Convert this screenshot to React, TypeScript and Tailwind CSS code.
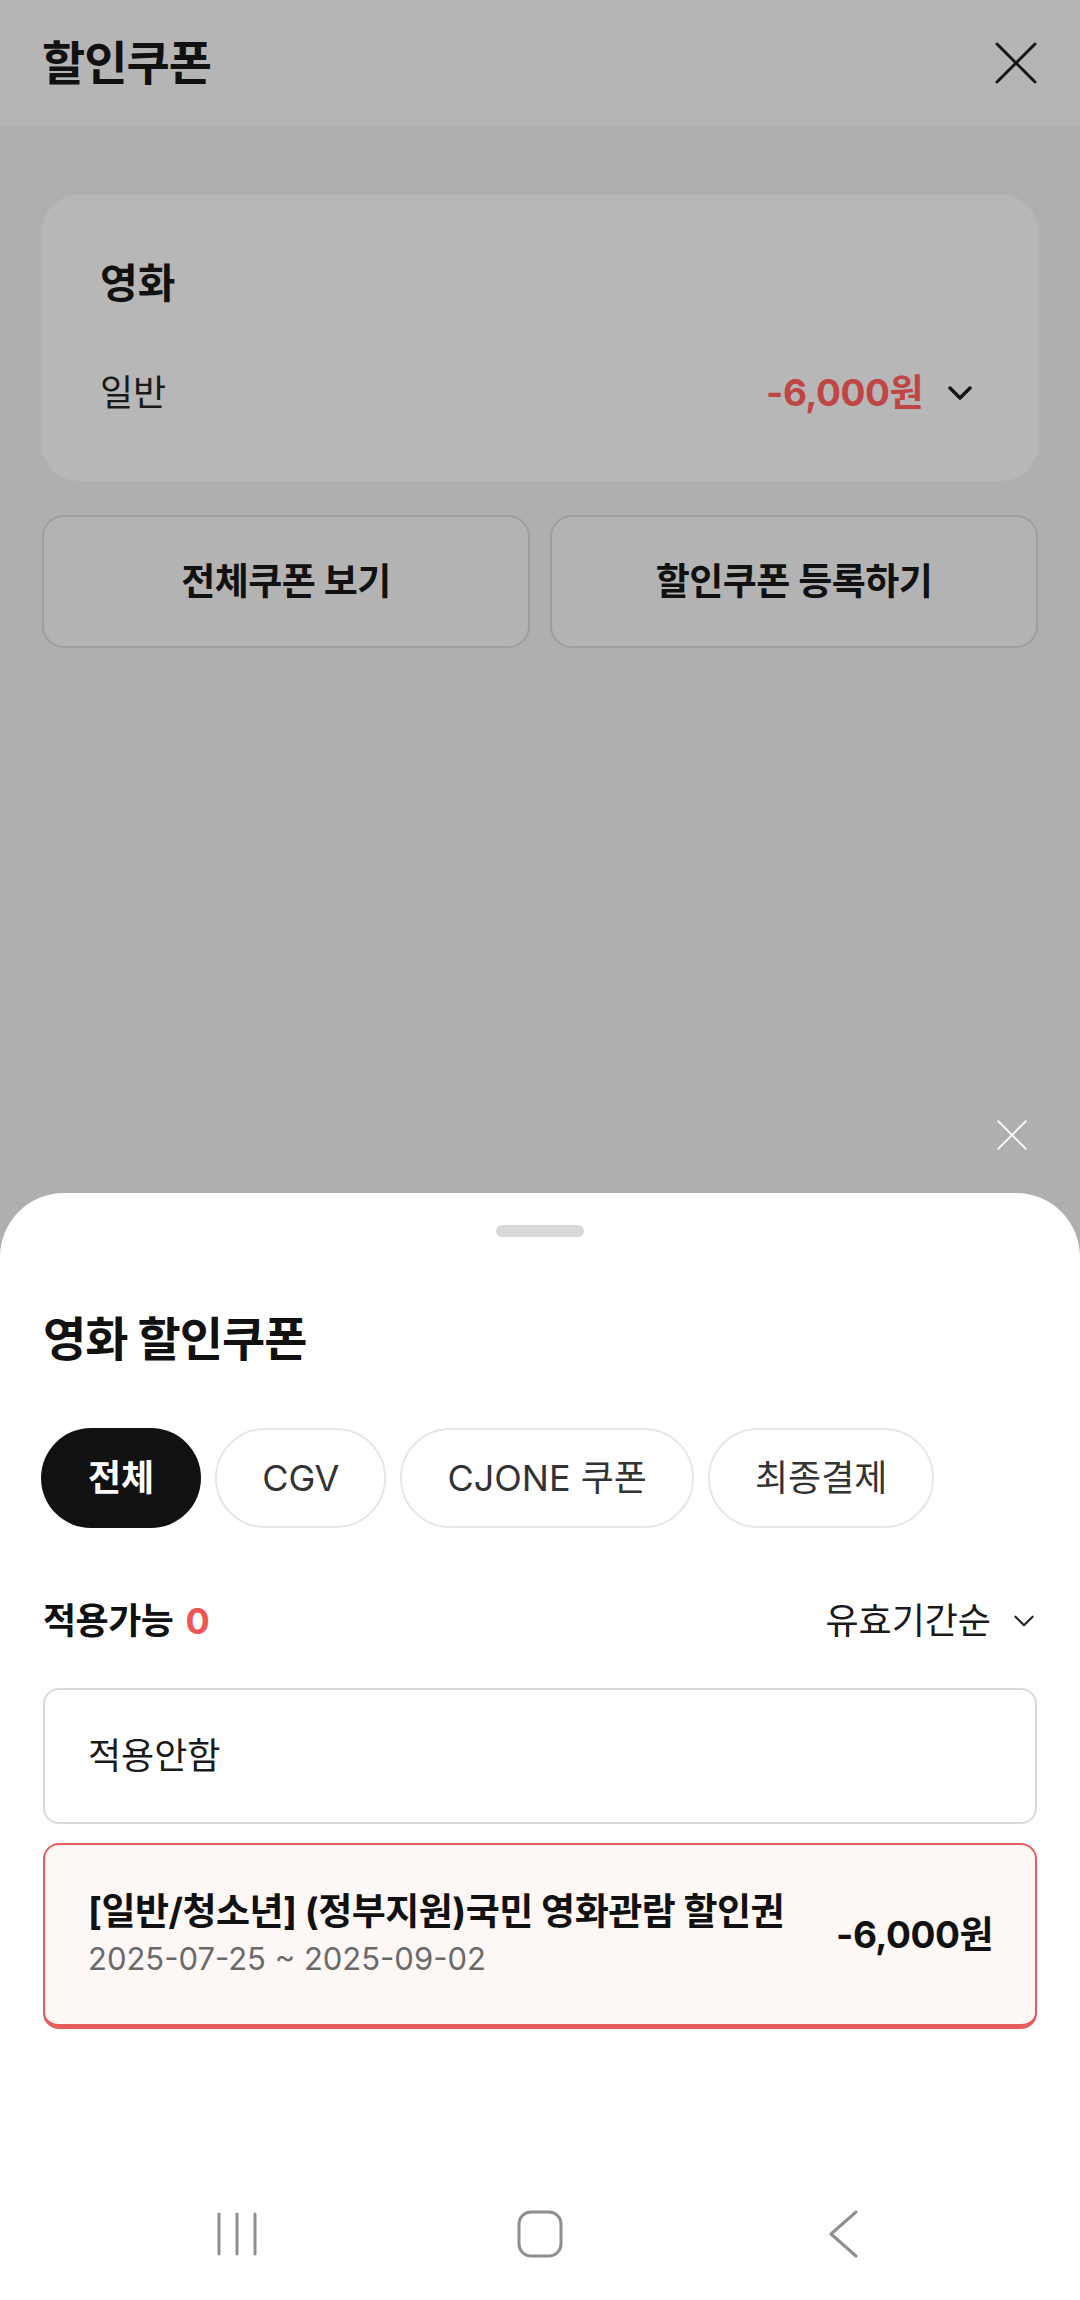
import React from 'react';

const tabs = ['전체', 'CGV', 'CJONE 쿠폰', '최종결제'];

const CloseIcon = ({ className, stroke }: { className: string; stroke: number }) => (
  <svg viewBox="0 0 44 44" className={className} fill="none" stroke="currentColor" strokeWidth={stroke} strokeLinecap="round">
    <path d="M3 3 L41 41 M41 3 L3 41" />
  </svg>
);

const Chevron = ({ className, stroke }: { className: string; stroke: number }) => (
  <svg viewBox="0 0 24 14" className={className} fill="none" stroke="currentColor" strokeWidth={stroke} strokeLinecap="round" strokeLinejoin="round">
    <path d="M2 2 L12 12 L22 2" />
  </svg>
);

const App = () => {
  return (
    <div className="relative w-[1080px] h-[2300px] overflow-hidden flex flex-col font-['Inter','Noto_Sans_CJK_KR',sans-serif] text-[#111]">
      {/* dimmed page behind the sheet */}
      <div className="h-[126px] bg-[#b5b5b5] flex items-center justify-between pl-[42px] pr-[42px] shrink-0">
        <h1 className="text-[47px] leading-[56px] font-bold tracking-[-1px]">할인쿠폰</h1>
        <CloseIcon className="w-[44px] h-[44px] text-[#151515]" stroke={3} />
      </div>

      <div className="flex-1 bg-[#afafaf] px-[42px] pt-[69px]">
        <div className="h-[286px] rounded-[36px] bg-[#b7b7b7] pl-[58px] pr-[66px] pt-[63px]">
          <p className="text-[41px] leading-[50px] font-bold">영화</p>
          <div className="mt-[60px] flex items-center justify-between h-[50px]">
            <span className="text-[36px] text-[#1a1a1a]">일반</span>
            <div className="flex items-center gap-[25px]">
              <span className="text-[37px] font-bold text-[#c04646] tracking-[-0.5px]">-6,000원</span>
              <Chevron className="w-[24px] h-[14px] text-[#151515]" stroke={3.5} />
            </div>
          </div>
        </div>

        <div className="mt-[34px] grid grid-cols-2 gap-[20px]">
          <div className="h-[133px] rounded-[22px] border-2 border-[#9e9e9e] bg-[#b3b3b3] flex items-center justify-center text-[37px] font-bold tracking-[-0.5px]">
            전체쿠폰 보기
          </div>
          <div className="h-[133px] rounded-[22px] border-2 border-[#9e9e9e] bg-[#b3b3b3] flex items-center justify-center text-[37px] font-bold tracking-[-0.5px]">
            할인쿠폰 등록하기
          </div>
        </div>
      </div>

      {/* sheet close button on the dim layer */}
      <CloseIcon className="absolute left-[996px] top-[1119px] w-[32px] h-[32px] text-white" stroke={2.5} />

      {/* bottom sheet */}
      <div className="absolute left-0 right-0 bottom-0 h-[1107px] bg-white rounded-t-[64px] flex flex-col">
        <div className="mt-[32px] mx-auto w-[88px] h-[12px] rounded-full bg-[#d9d9d9]" />

        <div className="px-[43px]">
          <h2 className="mt-[74px] text-[47px] leading-[56px] font-bold tracking-[-1px]">영화 할인쿠폰</h2>

          <div className="mt-[61px] -ml-[2px] flex gap-[14px]">
            {tabs.map((t, i) =>
              i === 0 ? (
                <div key={t} className="h-[100px] px-[47px] rounded-full bg-[#111] text-white flex items-center text-[36px] font-bold">
                  {t}
                </div>
              ) : (
                <div key={t} className="h-[100px] px-[45px] rounded-full border-2 border-[#e6e6e6] text-[#333] flex items-center text-[36px]">
                  {t}
                </div>
              )
            )}
          </div>

          <div className="mt-[71px] h-[44px] flex items-center justify-between">
            <div className="flex items-center gap-[12px] text-[36px] font-bold tracking-[-0.5px]">
              <span>적용가능</span>
              <span className="text-[#f05555]">0</span>
            </div>
            <div className="flex items-center gap-[22px] pr-[2px]">
              <span className="text-[36px] text-[#1a1a1a]">유효기간순</span>
              <Chevron className="w-[22px] h-[12px] text-[#222]" stroke={2.5} />
            </div>
          </div>

          <div className="mt-[45px] h-[136px] rounded-[16px] border-2 border-[#dadada] flex items-center pl-[43px] text-[36px] text-[#1a1a1a]">
            적용안함
          </div>

          <div className="mt-[19px] h-[186px] rounded-[16px] border-2 border-b-[5px] border-[#e85c5c] bg-[#fdf7f5] flex items-center justify-between pl-[43px] pr-[42px]">
            <div>
              <p className="text-[37px] leading-[44px] font-bold tracking-[-0.5px]">[일반/청소년] (정부지원)국민 영화관람 할인권</p>
              <p className="mt-[5px] text-[31px] leading-[40px] text-[#6a6a6a]">2025-07-25 ~ 2025-09-02</p>
            </div>
            <span className="text-[37px] font-bold tracking-[-0.5px]">-6,000원</span>
          </div>
        </div>

        {/* system navigation bar */}
        <div className="mt-auto h-[132px] flex items-center justify-center text-[#8e8e8e]">
          <div className="w-[303px] flex justify-center">
            <svg viewBox="0 0 40 44" className="w-[40px] h-[44px]" fill="none" stroke="currentColor" strokeWidth={3} strokeLinecap="round">
              <path d="M2 2 V42 M20 2 V42 M38 2 V42" />
            </svg>
          </div>
          <div className="w-[303px] flex justify-center">
            <svg viewBox="0 0 46 48" className="w-[46px] h-[48px]" fill="none" stroke="currentColor" strokeWidth={3}>
              <rect x="2" y="2" width="42" height="44" rx="12" />
            </svg>
          </div>
          <div className="w-[303px] flex justify-center">
            <svg viewBox="0 0 30 48" className="w-[30px] h-[48px]" fill="none" stroke="currentColor" strokeWidth={3} strokeLinecap="round" strokeLinejoin="round">
              <path d="M28 2 L3 24 L28 46" />
            </svg>
          </div>
        </div>
      </div>
    </div>
  );
};

export default App;
